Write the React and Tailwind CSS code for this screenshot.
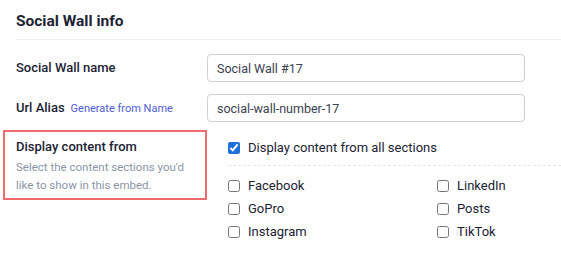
export default function App() {
  const sources = [
    ["Facebook", "LinkedIn"],
    ["GoPro", "Posts"],
    ["Instagram", "TikTok"],
  ];

  return (
    <div className="w-[561px] h-[276px] bg-white font-['Roboto',sans-serif] text-[#1c2333] overflow-hidden">
      <div className="pl-4">
        <h2 className="pt-[10px] h-[39px] text-[15.5px] font-bold leading-[22px]">
          Social Wall info
        </h2>
        <div className="border-t border-[#efefef]" />

        <div className="grid grid-cols-[191px_1fr] items-center pt-[14px] gap-y-3">
          <label className="text-[13px] font-medium">Social Wall name</label>
          <input
            defaultValue="Social Wall #17"
            className="w-[318px] h-[28px] px-[9px] rounded border border-[#ccd2dc] text-[12.5px] text-[#3a4150] outline-none"
          />

          <div className="flex items-baseline gap-[6px]">
            <span className="text-[13px] font-medium">Url Alias</span>
            <span className="text-[11px] text-[#4f5bd5]">Generate from Name</span>
          </div>
          <input
            defaultValue="social-wall-number-17"
            className="w-[318px] h-[28px] px-[9px] rounded border border-[#ccd2dc] text-[12.5px] text-[#3a4150] outline-none"
          />
        </div>

        <div className="grid grid-cols-[191px_1fr] mt-[8px]">
          <div className="-ml-[13px] pl-[11px] pt-[7px] h-[70px] border-2 border-[#ee6b6e]">
            <div className="text-[13px] font-medium leading-[16px]">Display content from</div>
            <p className="w-[178px] mt-[3px] text-[11.5px] leading-[18px] text-[#8b95a6]">
              Select the content sections you'd like to show in this embed.
            </p>
          </div>

          <div className="pl-[21px]">
            <label className="flex items-center gap-[8px] h-[29px] pt-[7px] text-[13px]">
              <input type="checkbox" defaultChecked className="w-[12px] h-[12px] m-0 accent-[#1f6fd8]" />
              Display content from all sections
            </label>
            <div className="border-t border-dashed border-[#e6e8ec] mt-[6px] mb-[12px]" />
            <div className="grid grid-cols-[209px_1fr] gap-y-[7px]">
              {sources.flat().map((name) => (
                <label key={name} className="flex items-center gap-[8px] h-[16px] text-[13px]">
                  <input type="checkbox" className="w-[12px] h-[12px] m-0" />
                  {name}
                </label>
              ))}
            </div>
          </div>
        </div>
      </div>
    </div>
  );
}
